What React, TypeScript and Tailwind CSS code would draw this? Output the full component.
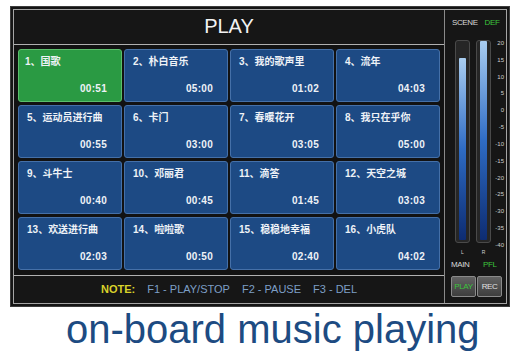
const songs = [
  { name: '国歌', time: '00:51' },
  { name: '朴白音乐', time: '05:00' },
  { name: '我的歌声里', time: '01:02' },
  { name: '流年', time: '04:03' },
  { name: '运动员进行曲', time: '00:55' },
  { name: '卡门', time: '03:00' },
  { name: '春暖花开', time: '03:05' },
  { name: '我只在乎你', time: '05:00' },
  { name: '斗牛士', time: '00:40' },
  { name: '邓丽君', time: '00:45' },
  { name: '滴答', time: '01:45' },
  { name: '天空之城', time: '03:03' },
  { name: '欢送进行曲', time: '02:03' },
  { name: '啦啦歌', time: '00:50' },
  { name: '稳稳地幸福', time: '02:40' },
  { name: '小虎队', time: '04:02' },
];

const scale = ['20', '15', '10', '5', '0', '-5', '-10', '-15', '-20', '-25', '-30', '-35', '-40'];

function Meter({ top }: { top: number }) {
  return (
    <div className="w-[15px] h-[203px] rounded-[3px] border border-[#4a4a4a] bg-[#262626] flex flex-col px-[3px] pb-[2px]">
      <div style={{ height: top }} className="shrink-0" />
      <div className="flex-1 rounded-[1px] bg-gradient-to-b from-[#a9cdf0] via-[#2f6cc4] to-[#0e2c72]" />
    </div>
  );
}

export default function App() {
  return (
    <div className="w-[525px] h-[358px] bg-white font-['Liberation_Sans','Noto_Sans_CJK_SC',sans-serif]">
      <div className="ml-[10px] pt-[6px]">
        <div className="w-[500px] h-[301px] bg-[#151515] border border-[#3c3c3c] p-[2px]">
          <div className="h-full border border-[#a5a5a5] flex">
            {/* left panel */}
            <div className="w-[431px] border-r border-[#8a8a8a] flex flex-col">
              <div className="h-[35px] border-b border-[#b0b0b0] bg-[#161616] flex items-center justify-center">
                <span className="text-[20px] leading-none text-[#f2f2f2] pb-[2px]">PLAY</span>
              </div>
              <div className="h-[231px] border-b border-[#b0b0b0] bg-[#121212] pt-[4px] pl-[4px]">
                <div className="grid grid-cols-[repeat(4,104px)] grid-rows-[repeat(4,53px)] gap-x-[2px] gap-y-[3px]">
                  {songs.map((s, i) => (
                    <div
                      key={i}
                      className={
                        i === 0
                          ? 'rounded-[3px] border border-[#5cbf6c] bg-[#2a9a43] flex flex-col justify-between pl-[6px] pr-[14px] pt-[5px] pb-[5px]'
                          : 'rounded-[3px] border border-[#4570a8] bg-[#1d4a84] flex flex-col justify-between pl-[8px] pr-[14px] pt-[5px] pb-[5px]'
                      }
                    >
                      <span className="text-[10px] leading-[14px] font-bold text-[#eef2f7]">
                        {i + 1}、{s.name}
                      </span>
                      <span className="self-end text-[10px] leading-[14px] font-bold text-[#eef2f7] tracking-[0.3px]">
                        {s.time}
                      </span>
                    </div>
                  ))}
                </div>
              </div>
              <div className="flex-1 bg-[#161616] flex items-center justify-center gap-3 text-[11px] pb-[1px]">
                <span className="font-bold text-[#d9d22a]">NOTE:</span>
                <span className="text-[#7d9fc6]">F1 - PLAY/STOP</span>
                <span className="text-[#7d9fc6]">F2 - PAUSE</span>
                <span className="text-[#7d9fc6]">F3 - DEL</span>
              </div>
            </div>
            {/* right panel */}
            <div className="flex-1 bg-[#161616] flex flex-col">
              <div className="h-[30px] flex items-center pb-[4px] pl-[7px] gap-[7px] text-[8px] tracking-[-0.4px]">
                <span className="text-[#d8d8d8]">SCENE</span>
                <span className="text-[#3cc43c]">DEF</span>
              </div>
              <div className="flex items-start pl-[10px]">
                <Meter top={17} />
                <div className="w-[6px]" />
                <Meter top={0} />
                <div className="w-[13px] h-[208px] flex flex-col justify-between items-end text-[6px] leading-[6px] text-[#cfcfcf]">
                  {scale.map((v) => (
                    <span key={v}>{v}</span>
                  ))}
                </div>
              </div>
              <div className="flex pl-[10px] h-[8px] text-[5px] leading-[8px] text-[#cfcfcf]">
                <span className="w-[15px] text-center">L</span>
                <span className="w-[6px]" />
                <span className="w-[15px] text-center">R</span>
              </div>
              <div className="flex mt-[2px] h-[14px] items-center pl-[6px] text-[8px] tracking-[-0.4px]">
                <span className="w-[32px] text-[#d8d8d8]">MAIN</span>
                <span className="text-[#3cc43c]">PFL</span>
              </div>
              <div className="flex mt-[4px] ml-[6px] gap-[1px]">
                <div className="w-[25px] h-[21px] rounded-[2px] border border-[#8a8a8a] bg-gradient-to-b from-[#626262] to-[#3e3e3e] flex items-center justify-center text-[8px] tracking-[-0.4px] text-[#3cc43c]">
                  PLAY
                </div>
                <div className="w-[25px] h-[21px] rounded-[2px] border border-[#8a8a8a] bg-gradient-to-b from-[#626262] to-[#3e3e3e] flex items-center justify-center text-[8px] tracking-[-0.4px] text-[#e0e0e0]">
                  REC
                </div>
              </div>
            </div>
          </div>
        </div>
      </div>
      <div className="pl-[66px] mt-[2px] text-[40px] leading-[40px] text-[#1d4b82]">on-board music playing</div>
    </div>
  );
}
